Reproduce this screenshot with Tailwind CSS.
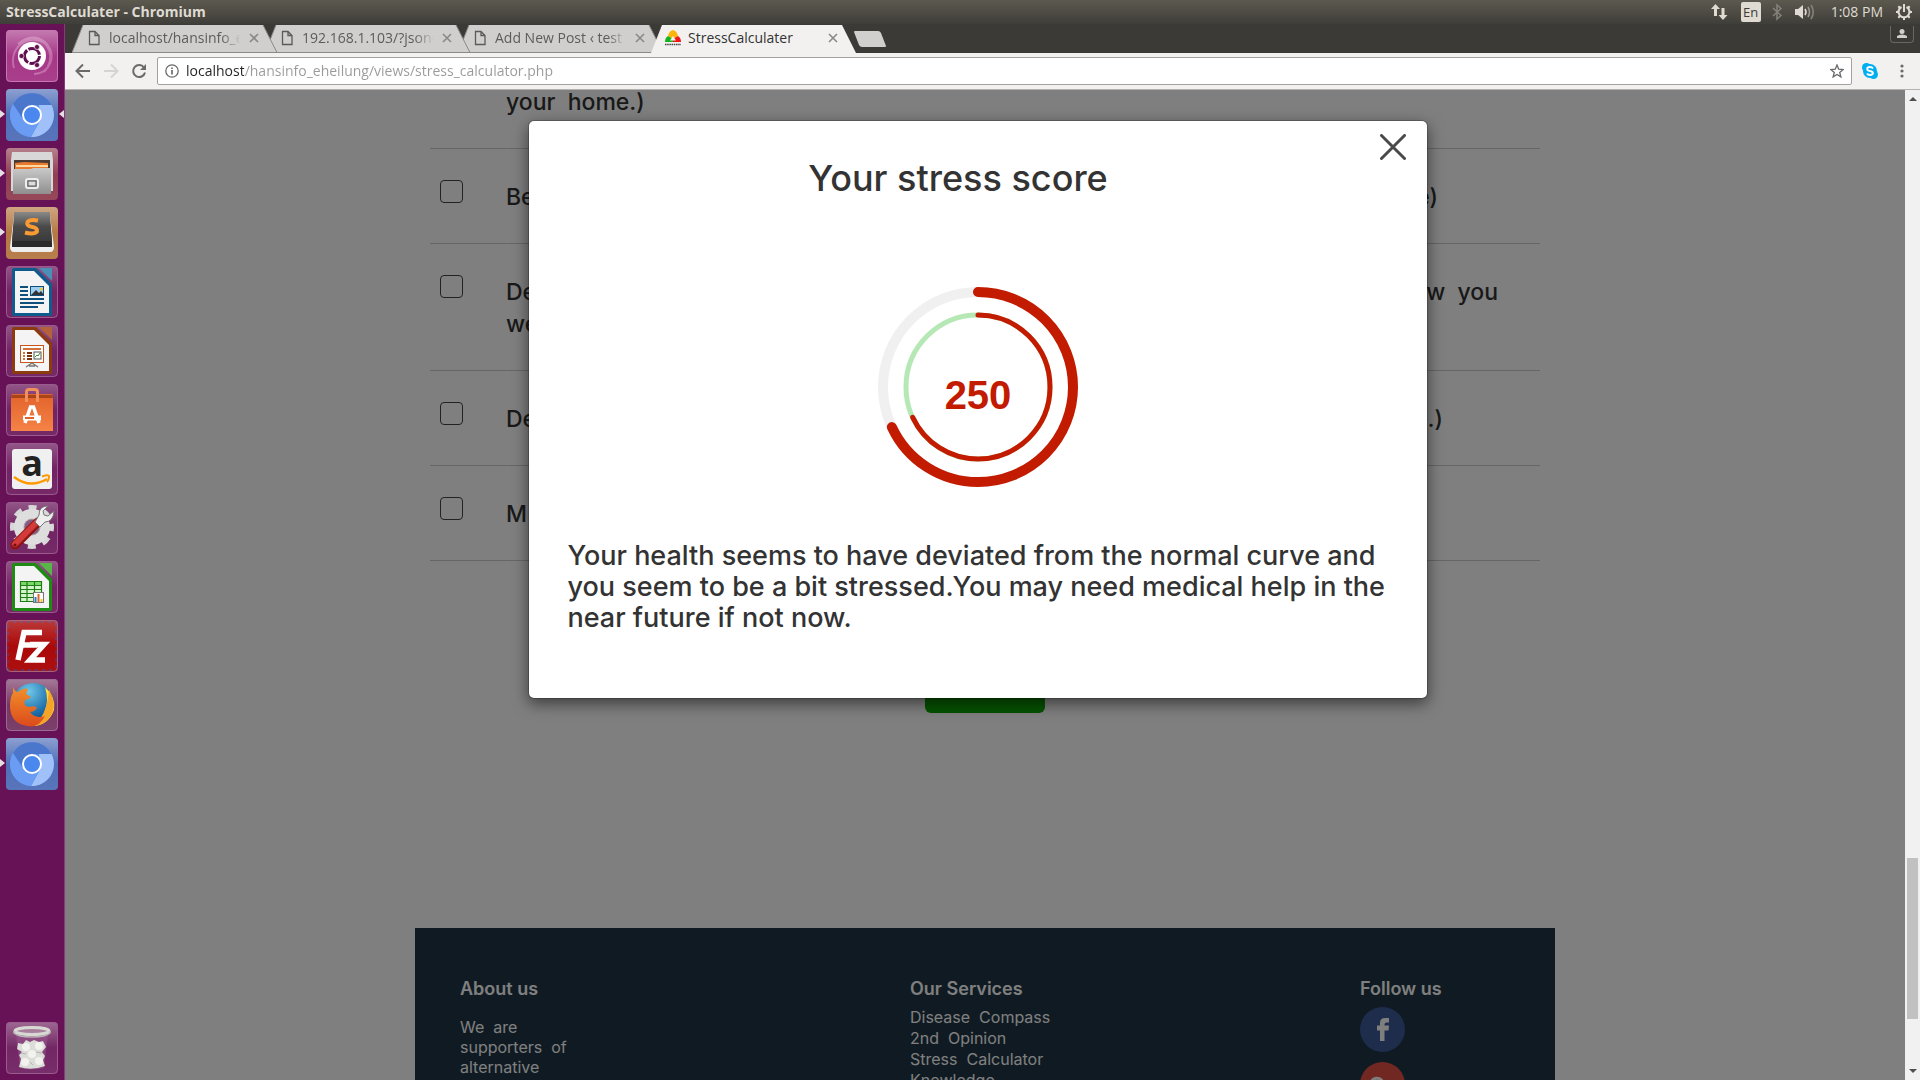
<!DOCTYPE html>
<html lang="en">
<head>
<meta charset="utf-8">
<title>StressCalculater</title>
<script src="https://cdn.jsdelivr.net/npm/@tailwindcss/browser@4"></script>
</head>
<body class="h-screen overflow-hidden flex flex-col bg-[#3c3a36] font-['Open_Sans','Noto_Sans',sans-serif]">

<!-- Gradients and shapes shared by the launcher icons -->
<svg class="absolute" width="0" height="0" aria-hidden="true">
  <defs>
    <linearGradient id="gloss" x1="0" y1="0" x2="0" y2="1"><stop offset="0" stop-color="#fff" stop-opacity=".38"/><stop offset=".5" stop-color="#fff" stop-opacity=".06"/><stop offset="1" stop-color="#fff" stop-opacity=".1"/></linearGradient>
    <linearGradient id="steel" x1="0" y1="0" x2="0" y2="1"><stop offset="0" stop-color="#c9c9c9"/><stop offset="1" stop-color="#8f8f8f"/></linearGradient>
    <linearGradient id="dark" x1="0" y1="0" x2="0" y2="1"><stop offset="0" stop-color="#8a8a8a"/><stop offset=".5" stop-color="#4a4a4a"/><stop offset="1" stop-color="#3a3a3a"/></linearGradient>
    <linearGradient id="bag" x1="0" y1="0" x2="0" y2="1"><stop offset="0" stop-color="#e2632a"/><stop offset="1" stop-color="#f58247"/></linearGradient>
    <linearGradient id="fox" x1="0" y1="0" x2="0" y2="1"><stop offset="0" stop-color="#f0902a"/><stop offset="1" stop-color="#dc4a1c"/></linearGradient>
    <radialGradient id="globe" cx=".4" cy=".2" r=".9"><stop offset="0" stop-color="#6fc8ea"/><stop offset=".6" stop-color="#1d6da8"/><stop offset="1" stop-color="#0d3564"/></radialGradient>
    <symbol id="chromium" viewBox="0 0 52 52">
      <circle cx="26" cy="26" r="22" fill="#5b8ee8"/>
      <path d="M7 15A22 22 0 0 1 45.500 16L26 16L16 31Z" fill="#4a76cc"/>
      <path d="M45.500 16A22 22 0 0 1 25 48L35 30L33 16Z" fill="#9fc0f8"/>
      <path d="M7 15A22 22 0 0 0 25 48L33 33L17 30Z" fill="#699cf2"/>
      <circle cx="26" cy="26" r="9" fill="#4a88f0" stroke="#fff" stroke-width="2"/>
    </symbol>
    <symbol id="page" viewBox="0 0 16 16"><path d="M3.500 1.500H9L13 5.500V14.500H3.500ZM9 1.500V5.500H13" fill="none" stroke="#5a5a5a" stroke-width="1.300"/></symbol>
    <symbol id="cross" viewBox="0 0 10 10"><path d="M1 1L9 9M9 1L1 9" fill="none" stroke="#888" stroke-width="1.600"/></symbol>
  </defs>
</svg>

<!-- Desktop panel -->
<header class="h-6 shrink-0 flex items-center justify-between pl-1.5 pr-[7px] bg-linear-to-b from-[#5c594f] to-[#403e39] text-[#dfdbd2]">
  <h1 class="text-sm font-bold leading-6">StressCalculater - Chromium</h1>
  <div class="flex items-center">
    <svg class="w-[18px] h-[18px] mr-[13px]" viewBox="0 0 18 18" fill="#dfdbd2"><path d="M5.500 1L10 6H7V13H4V6H1ZM13 17L8.500 12H11.500V5H14.500V12H17.500Z"/></svg>
    <span class="w-5 h-5 mr-[10px] rounded-xs bg-[#dfdbd2] text-[#3c3b37] text-[13px] leading-5 text-center">En</span>
    <svg class="w-3 h-5 mr-3" viewBox="0 0 12 20" fill="none" stroke="#85827b" stroke-width="1.500"><path d="M2 6L10 13.500L6 17V3L10 6.500L2 14"/></svg>
    <svg class="w-5 h-4 mr-4" viewBox="0 0 20 16" fill="none" stroke-width="1.600"><path d="M0 5H3L8 1V15L3 11H0Z" fill="#dfdbd2"/><path d="M10 5Q12 8 10 11" stroke="#dfdbd2"/><path d="M13 3Q16 8 13 13" stroke="#9a978f"/><path d="M16 1Q20.500 8 16 15" stroke="#85827b"/></svg>
    <time class="text-sm leading-6 mr-3">1:08 PM</time>
    <svg class="w-[18px] h-[18px]" viewBox="0 0 18 18" fill="none" stroke="#dfdbd2"><path d="M6.500 4A5.500 5.500 0 1 0 11.500 4" stroke-width="2.200"/><path d="M9 1V9" stroke-width="2"/><path d="M1 9H3.500M14.500 9H17M3.300 14.700L5 13M14.700 14.700L13 13M9 14.500V17M3.300 3.300L5 5M14.700 3.300L13 5" stroke-width="2"/></svg>
  </div>
</header>

<div class="flex flex-1 min-h-0">
  <!-- Launcher -->
  <nav class="w-[65px] shrink-0 flex flex-col gap-[7px] pt-1.5 pb-1.5 pl-1.5 bg-[#671257] border-r border-[#8a3a7c]">
    <a href="#" aria-label="Dash" class="block w-[52px] h-[52px] rounded-sm overflow-hidden">
      <svg viewBox="0 0 52 52"><rect width="52" height="52" fill="#a02a80"/><path d="M8 38C2 18 22 2 40 14C52 24 44 44 28 44M26 8C44 8 50 30 38 42M12 14C26 2 44 8 45 26" fill="none" stroke="#cf86b8" stroke-width="2" opacity=".6"/><rect width="52" height="52" fill="url(#gloss)"/><circle cx="26" cy="26" r="14" fill="#fff"/><circle cx="26" cy="26" r="7.500" fill="none" stroke="#5e0f4c" stroke-width="3" stroke-dasharray="14.200 1.500"/><g fill="#5e0f4c" stroke="#fff" stroke-width=".6"><circle cx="15.500" cy="26" r="2.500"/><circle cx="31" cy="17" r="2.500"/><circle cx="31" cy="35" r="2.500"/></g><rect x=".5" y=".5" width="51" height="51" rx="4" fill="none" stroke="#c777b0"/></svg>
    </a>
    <a href="#" aria-label="Chromium" class="relative block w-[52px] h-[52px]">
      <svg class="rounded-sm" viewBox="0 0 52 52"><rect width="52" height="52" fill="#4666b4"/><rect width="52" height="52" fill="url(#gloss)"/><use href="#chromium"/></svg>
      <span class="absolute -left-1.5 top-[21px] border-y-4 border-l-5 border-y-transparent border-l-[#e4dfe3]"></span>
      <span class="absolute -right-1.5 top-[21px] border-y-4 border-r-5 border-y-transparent border-r-[#e4dfe3]"></span>
    </a>
    <a href="#" aria-label="Files" class="relative block w-[52px] h-[52px]">
      <svg class="rounded-sm" viewBox="0 0 52 52"><rect width="52" height="52" fill="#8a3347"/><rect width="52" height="52" fill="url(#gloss)"/><path d="M6 4H46L47 12V43H5V12Z" fill="#d8d8d8"/><path d="M8 12H44V24H8Z" fill="#4a3a34"/><path d="M9 15L18 14L42 15V24H9Z" fill="#e8792e"/><path d="M10 18H42" stroke="#ffd9a0" stroke-width="2"/><path d="M7 21H25L27 20H45V46H7Z" fill="url(#steel)"/><rect x="20" y="31" width="12" height="9" rx="2" fill="none" stroke="#eee" stroke-width="2"/><rect x="22" y="33" width="8" height="5" fill="#ddd" stroke="#555"/></svg>
      <span class="absolute -left-1.5 top-[21px] border-y-4 border-l-5 border-y-transparent border-l-[#e4dfe3]"></span>
    </a>
    <a href="#" aria-label="Sublime Text" class="relative block w-[52px] h-[52px]">
      <svg class="rounded-sm" viewBox="0 0 52 52"><rect width="52" height="52" fill="#b07038"/><rect width="52" height="52" fill="url(#gloss)"/><path d="M8 8L4 40Q4 45 8 45H44Q48 45 48 40L44 8Z" fill="#eee"/><path d="M9 5H43L46 36V40H6V36Z" fill="#2a2a2a"/><path d="M10 5H42Q44 5 44 8L46 34H6L8 8Q8 5 10 5Z" fill="url(#dark)"/><path d="M32 13.500Q24 12 21.500 15Q20 18.500 25.500 19.800Q32 21 31 24.500Q28 28 19 25.500" fill="none" stroke="#f99a32" stroke-width="4"/></svg>
      <span class="absolute -left-1.5 top-[21px] border-y-4 border-l-5 border-y-transparent border-l-[#e4dfe3]"></span>
    </a>
    <a href="#" aria-label="Writer" class="block w-[52px] h-[52px] rounded-sm overflow-hidden">
      <svg viewBox="0 0 52 52"><rect width="52" height="52" fill="#6b1a5c"/><rect width="52" height="52" fill="url(#gloss)" opacity=".7"/><path d="M6 4Q6 2 8 2H30L46 18V48Q46 50 44 50H8Q6 50 6 48Z" fill="#0f5c8c"/><path d="M33 2H46V15Z" fill="#4a8fb5"/><path d="M9 5H28L43 20V47H9Z" fill="#f4f4f4"/><path d="M14 21H22M14 25H22M14 29H22M14 33H38M14 37H38M14 41H32" stroke="#0f4f7c" stroke-width="2"/><rect x="24.500" y="20.500" width="13" height="9" fill="#9cd0ee" stroke="#0f4f7c"/><path d="M25 29L30 24L33 27L35 25L38 29Z" fill="#333"/><circle cx="35.500" cy="23" r="1.500" fill="#f5c820"/><rect x=".5" y=".5" width="51" height="51" rx="4" fill="none" stroke="#9a5a90"/></svg>
    </a>
    <a href="#" aria-label="Impress" class="block w-[52px] h-[52px] rounded-sm overflow-hidden">
      <svg viewBox="0 0 52 52"><rect width="52" height="52" fill="#6b1a5c"/><rect width="52" height="52" fill="url(#gloss)" opacity=".7"/><path d="M6 4Q6 2 8 2H30L46 18V47Q46 49 44 49H8Q6 49 6 47Z" fill="#8c3a10"/><path d="M33 2H46V15Z" fill="#b5623a"/><path d="M9 5H28L43 20V46H9Z" fill="#f4f4f4"/><rect x="14.500" y="20.500" width="23" height="17" fill="#fff" stroke="#c8561c"/><path d="M17 24H35" stroke="#d4703c" stroke-width="2"/><path d="M17 28H19M17 31H19M17 34H19" stroke="#d4703c" stroke-width="2"/><path d="M21 28H26M21 31H26M21 34H26" stroke="#7a3210" stroke-width="2"/><rect x="28" y="27" width="7" height="7" fill="#fff" stroke="#555"/><path d="M29 32L31 30L32 31L34 28" stroke="#2a9c2a" fill="none"/><path d="M26 38L20 42M26 38L32 42M23 41H29" stroke="#777" stroke-width="1.500"/><rect x=".5" y=".5" width="51" height="51" rx="4" fill="none" stroke="#9a5a90"/></svg>
    </a>
    <a href="#" aria-label="Software" class="block w-[52px] h-[52px] rounded-sm overflow-hidden">
      <svg viewBox="0 0 52 52"><rect width="52" height="52" fill="#6b1a5c"/><rect width="52" height="52" fill="url(#gloss)" opacity=".7"/><path d="M6 10H46L47 14V47H5V14Z" fill="url(#bag)"/><path d="M6 11H46L47 14H5Z" fill="#a8431a"/><path d="M20.500 18V8Q20.500 5.500 23 5.500H29Q31.500 5.500 31.500 8V18" fill="none" stroke="#f0905c" stroke-width="3"/><path d="M19 39L24.500 23H27.500L33 39" fill="none" stroke="#fff" stroke-width="3.500"/><path d="M17 34H35" stroke="#fff" stroke-width="5"/><path d="M19 34H28" stroke="#e2632a" stroke-width="2"/><rect x=".5" y=".5" width="51" height="51" rx="4" fill="none" stroke="#9a5a90"/></svg>
    </a>
    <a href="#" aria-label="Amazon" class="block w-[52px] h-[52px]">
      <svg class="rounded-sm" viewBox="0 0 52 52"><rect width="52" height="52" fill="#6b1a5c"/><rect width="52" height="52" fill="url(#gloss)" opacity=".7"/><rect x="6" y="6" width="40" height="40" rx="3" fill="#f0f0f0"/><text x="26" y="33" text-anchor="middle" font-family="Open Sans, sans-serif" font-weight="700" font-size="36" fill="#222">a</text><path d="M8 34Q24 46 41 36" fill="none" stroke="#f90" stroke-width="2.500"/><path d="M36 33.500Q44 31 43 34Q43 37 41 39" fill="none" stroke="#f90" stroke-width="2"/><rect x=".5" y=".5" width="51" height="51" rx="4" fill="none" stroke="#9a5a90"/></svg>
    </a>
    <a href="#" aria-label="Settings" class="block w-[52px] h-[52px] rounded-sm overflow-hidden">
      <svg viewBox="0 0 52 52"><rect width="52" height="52" fill="#6b1a5c"/><rect width="52" height="52" fill="url(#gloss)" opacity=".7"/><circle cx="26" cy="25" r="19.500" fill="none" stroke="#d8d8d8" stroke-width="5" stroke-dasharray="8 7.310" stroke-dashoffset="4"/><circle cx="26" cy="25" r="13" fill="none" stroke="#dedede" stroke-width="10"/><circle cx="26" cy="25" r="8" fill="#8a5a80" stroke="#aaa"/><path d="M9 43L32 20" stroke="#8f1414" stroke-width="9" stroke-linecap="round"/><path d="M9 42L31 20" stroke="#d33a3a" stroke-width="6" stroke-linecap="round"/><path d="M29 20L34 25L39 20Q47 20 48 9L42 14L38 13L37 9L42 4Q33 4 33 13Z" fill="#eee" stroke="#777"/><circle cx="9" cy="43" r="1.500" fill="#701010"/><rect x=".5" y=".5" width="51" height="51" rx="4" fill="none" stroke="#9a5a90"/></svg>
    </a>
    <a href="#" aria-label="Calc" class="block w-[52px] h-[52px] rounded-sm overflow-hidden">
      <svg viewBox="0 0 52 52"><rect width="52" height="52" fill="#6b1a5c"/><rect width="52" height="52" fill="url(#gloss)" opacity=".7"/><path d="M6 4Q6 2 8 2H30L46 18V48Q46 50 44 50H8Q6 50 6 48Z" fill="#1e8c14"/><path d="M33 2H46V15Z" fill="#58b548"/><path d="M9 5H28L43 20V47H9Z" fill="#f4f4f4"/><path d="M14 20H36V41H14Z" fill="#d4f5cc"/><path d="M14 20H36V24H14Z" fill="#7ad868"/><path d="M14.500 20V41M21 20V41M28.500 20V41M35.500 20V41M14 20.500H36M14 24.500H36M14 28.500H36M14 32.500H36M14 36.500H36M14 40.500H36" stroke="#1e7c14" stroke-width="1.200"/><rect x="27.500" y="31.500" width="10" height="10" fill="#fff" stroke="#777"/><path d="M29.500 41V36" stroke="#2a7cc8" stroke-width="2"/><path d="M32.500 41V33" stroke="#e2632a" stroke-width="2"/><path d="M35.500 41V38" stroke="#f5c820" stroke-width="2"/><rect x=".5" y=".5" width="51" height="51" rx="4" fill="none" stroke="#9a5a90"/></svg>
    </a>
    <a href="#" aria-label="FileZilla" class="block w-[52px] h-[52px] rounded-sm overflow-hidden">
      <svg viewBox="0 0 52 52"><rect width="52" height="52" fill="#6b2050"/><rect x="3" y="3" width="46" height="46" fill="#a80000" stroke="#a80000" stroke-width="3" stroke-dasharray="4 3"/><rect width="52" height="52" fill="url(#gloss)" opacity=".6"/><path d="M36 12.500H18L12 40M15 25H31M24 24.500H38L24 40H39" fill="none" stroke="#fff" stroke-width="5.500"/><rect x=".5" y=".5" width="51" height="51" rx="4" fill="none" stroke="#b06070"/></svg>
    </a>
    <a href="#" aria-label="Firefox" class="block w-[52px] h-[52px] rounded-sm overflow-hidden">
      <svg viewBox="0 0 52 52"><rect width="52" height="52" fill="#6e2a5a"/><rect width="52" height="52" fill="url(#gloss)"/><circle cx="27" cy="25" r="21" fill="url(#globe)"/><path d="M39 8Q50 18 48 31Q42 47 26 47Q38 42 39 31Q43 22 39 8Z" fill="#ffd83a"/><path d="M43 11Q52 26 44 38Q38 47 26 47Q41 38 43 11Z" fill="#f5a42a"/><path d="M7 8Q9 13 12 13Q17 8 22 10L20 15L25 18Q22 21 19 21Q17 27 23 28Q29 26 31 29Q28 33 24 33Q29 40 39 37Q34 47 25 47.500Q4 46 4 27Q4 18 7 14Z" fill="url(#fox)"/><rect x=".5" y=".5" width="51" height="51" rx="4" fill="none" stroke="#9a6a90"/></svg>
    </a>
    <a href="#" aria-label="Chromium window" class="relative block w-[52px] h-[52px]">
      <svg class="rounded-sm" viewBox="0 0 52 52"><rect width="52" height="52" fill="#4666b4"/><rect width="52" height="52" fill="url(#gloss)"/><use href="#chromium"/></svg>
      <span class="absolute -left-1.5 top-[21px] border-y-4 border-l-5 border-y-transparent border-l-[#e4dfe3]"></span>
    </a>
    <a href="#" aria-label="Trash" class="block w-[52px] h-[52px] mt-auto rounded-sm overflow-hidden">
      <svg viewBox="0 0 52 52"><rect width="52" height="52" fill="#6b1a5c"/><rect width="52" height="52" fill="url(#gloss)" opacity=".9"/><path d="M10 12H42L38 46Q26 49 14 46Z" fill="#9a5a90" opacity=".5"/><path d="M12 21L17 22L20 18L24 20L28 18L33 20L37 19L40 25L36 30L39 34L37 38L39 44Q26 49 13 45L15 37L13 33L16 30L11 27Z" fill="#dcdcd8"/><g fill="#f2f2ee"><circle cx="20" cy="25" r="4"/><circle cx="33" cy="24" r="4"/><circle cx="26" cy="32" r="4"/><circle cx="19" cy="40" r="4"/><circle cx="33" cy="39" r="4"/></g><path d="M15 31L20 32M30 30L36 31M24 40L27 43" fill="none" stroke="#b4b4b0"/><ellipse cx="26" cy="9" rx="17" ry="3.500" fill="#a8809c" stroke="#d8d8d4" stroke-width="3"/><path d="M8 9V11Q12 15 26 15T44 11V9" fill="none" stroke="#b8b8b4" stroke-width="1.500"/><rect x=".5" y=".5" width="51" height="51" rx="4" fill="none" stroke="#9a5a90"/></svg>
    </a>
  </nav>

  <!-- Browser window -->
  <div class="flex-1 min-w-0 flex flex-col">
    <div class="h-[29px] shrink-0 flex justify-between pl-[7px] pr-1.5">
      <div class="flex text-sm leading-[26px] text-[#5c5c5c]">
        <div class="relative z-40 w-[205px] h-[29px] flex items-center pl-[14px] pb-0.5">
          <svg class="absolute inset-0 w-full h-full" viewBox="0 0 205 29"><path d="M0 29L11 1H191L205 29Z" fill="#d1cfcd"/><path d="M0 28.500L11 1M191 1L205 28.500H0" fill="none" stroke="#8c8a87"/></svg>
          <svg class="relative w-4 h-4"><use href="#page"/></svg>
          <span class="relative ml-[7px] w-[132px] overflow-hidden whitespace-nowrap [mask-image:linear-gradient(to_right,#000_85%,transparent)]">localhost/hansinfo_eheilung</span>
          <button class="relative ml-2" aria-label="Close tab"><svg class="w-[10px] h-[10px]"><use href="#cross"/></svg></button>
        </div>
        <div class="relative z-30 -ml-3 w-[205px] h-[29px] flex items-center pl-[14px] pb-0.5">
          <svg class="absolute inset-0 w-full h-full" viewBox="0 0 205 29"><path d="M0 29L11 1H191L205 29Z" fill="#d1cfcd"/><path d="M0 28.500L11 1M191 1L205 28.500H0" fill="none" stroke="#8c8a87"/></svg>
          <svg class="relative w-4 h-4"><use href="#page"/></svg>
          <span class="relative ml-[7px] w-[132px] overflow-hidden whitespace-nowrap [mask-image:linear-gradient(to_right,#000_85%,transparent)]">192.168.1.103/?json=</span>
          <button class="relative ml-2" aria-label="Close tab"><svg class="w-[10px] h-[10px]"><use href="#cross"/></svg></button>
        </div>
        <div class="relative z-20 -ml-3 w-[205px] h-[29px] flex items-center pl-[14px] pb-0.5">
          <svg class="absolute inset-0 w-full h-full" viewBox="0 0 205 29"><path d="M0 29L11 1H191L205 29Z" fill="#d1cfcd"/><path d="M0 28.500L11 1M191 1L205 28.500H0" fill="none" stroke="#8c8a87"/></svg>
          <svg class="relative w-4 h-4"><use href="#page"/></svg>
          <span class="relative ml-[7px] w-[132px] overflow-hidden whitespace-nowrap [mask-image:linear-gradient(to_right,#000_85%,transparent)]">Add New Post ‹ test –</span>
          <button class="relative ml-2" aria-label="Close tab"><svg class="w-[10px] h-[10px]"><use href="#cross"/></svg></button>
        </div>
        <div class="relative z-50 -ml-3 w-[205px] h-[29px] flex items-center pl-[14px] pb-0.5 text-[#333]">
          <svg class="absolute inset-0 w-full h-full" viewBox="0 0 205 29"><path d="M0 29L11 1H191L205 29Z" fill="#f2f1f0"/></svg>
          <svg class="relative w-4 h-4" viewBox="0 0 16 16"><path d="M8 0Q12 1 13 6L8 9L3 6Q4 1 8 0Z" fill="#fbb50a"/><path d="M3 6L8 9V12H0Q0 8 3 6Z" fill="#12b41c"/><path d="M13 6L8 9V12H16Q16 8 13 6Z" fill="#f01414"/><path d="M8 6L11 10.500H5Z" fill="#f2f1f0"/><path d="M0 14.500H16" stroke="#444" stroke-width="1.500" stroke-dasharray="1.500 .7"/></svg>
          <span class="relative ml-[7px] w-[132px] whitespace-nowrap">StressCalculater</span>
          <button class="relative ml-2" aria-label="Close tab"><svg class="w-[10px] h-[10px]"><use href="#cross"/></svg></button>
        </div>
        <button class="ml-[-2px] self-center" aria-label="New tab"><svg class="w-8 h-4" viewBox="0 0 32 16"><path d="M0 1Q0 0 1 0H24Q26 0 27 2L32 15Q32 16 31 16H8Q6 16 5 14Z" fill="#d1cfcd"/></svg></button>
      </div>
      <button class="w-6 h-[17px] mt-0.5 flex items-center justify-center rounded-b border border-t-0 border-[#6a6863]" aria-label="Profile"><svg class="w-[10px] h-[10px]" viewBox="0 0 10 10" fill="#d1cfcd"><circle cx="5" cy="2.500" r="2.500"/><path d="M0 9V7Q2 5.500 5 5.500T10 7V9Z"/></svg></button>
    </div>

    <div class="h-[37px] shrink-0 flex items-center pl-[10px] pr-[10px] bg-[#f2f1f0] border-b border-[#b4b2b0]">
      <button aria-label="Back"><svg class="w-4 h-4" viewBox="0 0 16 16" fill="none" stroke="#6a6a6a" stroke-width="2"><path d="M15 8H2M8 1.500L1.500 8L8 14.500"/></svg></button>
      <button class="ml-3" aria-label="Forward"><svg class="w-4 h-4" viewBox="0 0 16 16" fill="none" stroke="#d5d4d3" stroke-width="2"><path d="M1 8H14M8 1.500L14.500 8L8 14.500"/></svg></button>
      <button class="ml-3" aria-label="Reload"><svg class="w-4 h-4" viewBox="0 0 16 16" fill="none" stroke="#6a6a6a" stroke-width="2"><path d="M13 4.500A6 6 0 1 0 14 9.500"/><path d="M15 1V7H9Z" fill="#6a6a6a" stroke="none"/></svg></button>
      <div class="ml-[10px] flex-1 h-7 flex items-center px-[7px] gap-[7px] bg-white border border-[#a4a2a0] rounded-xs">
        <svg class="w-[14px] h-[14px] shrink-0" viewBox="0 0 14 14" fill="none" stroke="#6a6a6a"><circle cx="7" cy="7" r="6.200" stroke-width="1.300"/><path d="M7 6V10.500M7 3.500V5" stroke-width="1.700"/></svg>
        <input aria-label="Address" class="flex-1 min-w-0 text-sm outline-none bg-clip-text text-transparent [background-image:linear-gradient(to_right,#222_58px,#999_58px)]" value="localhost/hansinfo_eheilung/views/stress_calculator.php">
        <button aria-label="Bookmark"><svg class="w-[14px] h-[14px]" viewBox="0 0 14 14" fill="none" stroke="#6a6a6a" stroke-width="1.300"><path d="M7 1L8.700 5.200L13.200 5.500L9.700 8.400L10.900 12.900L7 10.400L3.100 12.900L4.300 8.400L.8 5.500L5.300 5.200Z"/></svg></button>
      </div>
      <button class="ml-[10px]" aria-label="Skype"><svg class="w-4 h-4" viewBox="0 0 16 16"><circle cx="8" cy="8" r="7" fill="#00aff0"/><circle cx="4.500" cy="4.500" r="4.500" fill="#00aff0"/><circle cx="11.500" cy="11.500" r="4.500" fill="#00aff0"/><path d="M11 5.500Q10 4 8 4Q5.200 4 5.200 5.900Q5.200 7.400 8 8Q10.900 8.500 10.900 10.200Q10.700 12 8 12Q6 12 5 10.400" fill="none" stroke="#fff" stroke-width="1.900"/></svg></button>
      <button class="ml-4" aria-label="Menu"><svg class="w-4 h-4" viewBox="0 0 16 16" fill="#6a6a6a"><circle cx="8" cy="3" r="1.600"/><circle cx="8" cy="8" r="1.600"/><circle cx="8" cy="13" r="1.600"/></svg></button>
    </div>

    <div class="flex flex-1 min-h-0">
      <div class="relative flex-1 min-w-0 overflow-hidden bg-white font-['Inter',sans-serif]">
        <!-- Stress questionnaire, scrolled to its end -->
        <main class="-mt-1 mx-auto w-full max-w-[1140px] text-[#333]">
          <form class="px-[15px] text-[23px] leading-8 font-medium">
            <div class="pl-[76px] pb-[30px] border-b border-[#ccc]">your&nbsp; home.)</div>
            <div class="flex items-start pl-[10px] pt-8 pb-[30px] border-b border-[#ccc]">
              <input id="q1" type="checkbox" class="appearance-none w-[23px] h-[23px] -mt-px mr-[43px] shrink-0 border border-[#444] rounded">
              <label for="q1" class="flex flex-1 justify-between pr-[102px]"><span>Be</span><span>e)</span></label>
            </div>
            <div class="flex items-start pl-[10px] pt-8 pb-[30px] border-b border-[#ccc]">
              <input id="q2" type="checkbox" class="appearance-none w-[23px] h-[23px] -mt-px mr-[43px] shrink-0 border border-[#444] rounded">
              <label for="q2" class="flex flex-1 justify-between pr-[42px]"><span>De<br>we</span><span>w&nbsp; you</span></label>
            </div>
            <div class="flex items-start pl-[10px] pt-8 pb-[30px] border-b border-[#ccc]">
              <input id="q3" type="checkbox" class="appearance-none w-[23px] h-[23px] -mt-px mr-[43px] shrink-0 border border-[#444] rounded">
              <label for="q3" class="flex flex-1 justify-between pr-[97px]"><span>De</span><span>s.)</span></label>
            </div>
            <div class="flex items-start pl-[10px] pt-8 pb-[30px] border-b border-[#ccc]">
              <input id="q4" type="checkbox" class="appearance-none w-[23px] h-[23px] -mt-px mr-[43px] shrink-0 border border-[#444] rounded">
              <label for="q4">M</label>
            </div>
            <button type="button" aria-label="Submit" class="block mx-auto mt-[104px] w-[120px] h-12 rounded-md bg-[#0aa600]"></button>
          </form>
          <footer class="mt-[215px] h-[400px] flex pl-[45px] pt-[51px] bg-[#1e3444] text-white text-base">
            <section class="w-[450px]">
              <h2 class="text-lg leading-5 font-semibold">About us</h2>
              <p class="mt-[18px] w-32 leading-5">We&nbsp; are supporters&nbsp; of alternative</p>
            </section>
            <section class="w-[450px]">
              <h2 class="text-lg leading-5 font-semibold">Our Services</h2>
              <ul class="mt-2 leading-[21px]">
                <li><a href="#">Disease&nbsp; Compass</a></li>
                <li><a href="#">2nd&nbsp; Opinion</a></li>
                <li><a href="#">Stress&nbsp; Calculator</a></li>
                <li><a href="#">Knowledge</a></li>
              </ul>
            </section>
            <section>
              <h2 class="text-lg leading-5 font-semibold">Follow us</h2>
              <div class="mt-2 flex flex-col gap-[10px]">
                <a href="#" aria-label="Facebook"><svg class="w-[45px] h-[45px]" viewBox="0 0 45 45"><circle cx="22.500" cy="22.500" r="22.500" fill="#3f5a99"/><path d="M20 34V23.500H17V18.500H20V16Q20 11 25 11H29V15.500H26.500Q24.500 15.500 24.500 17.500V18.500H29L28.500 23.500H24.500V34Z" fill="#fff"/></svg></a>
                <a href="#" aria-label="Google Plus"><svg class="w-[45px] h-[45px]" viewBox="0 0 45 45"><circle cx="22.500" cy="22.500" r="22.500" fill="#e45145"/><path d="M22 18.500A6.500 6.500 0 1 0 23.500 23H17M28 23H36M32 19V27" fill="none" stroke="#fff" stroke-width="3"/></svg></a>
              </div>
            </section>
          </footer>
        </main>

        <!-- Result dialog -->
        <div class="absolute inset-0 bg-black/50 flex items-start justify-center pt-[30px] pr-[15px]">
          <div role="dialog" aria-labelledby="score-title" class="w-full max-w-[900px] h-[579px] bg-white bg-clip-padding border border-black/20 rounded-md shadow-[0_5px_15px_rgba(0,0,0,0.5)] text-[#333]">
            <div class="flex items-start pr-[21px]">
              <h2 id="score-title" class="flex-1 pl-2 pt-[37px] text-4xl leading-10 font-medium text-center">Your stress score</h2>
              <button class="mt-[13px] w-[26px] h-[26px]" aria-label="Close"><svg viewBox="0 0 26 26" fill="none" stroke="#4a4a4a" stroke-width="3" stroke-linecap="round"><path d="M1.500 1.500L24.500 24.500M24.500 1.500L1.500 24.500"/></svg></button>
            </div>
            <svg class="mx-auto mt-[89px] w-[200px] h-[200px]" viewBox="0 0 200 200" fill="none">
              <circle cx="100" cy="100" r="95" stroke="#f0f0f0" stroke-width="10"/>
              <circle cx="100" cy="100" r="72" stroke="#b6e8b6" stroke-width="5"/>
              <circle cx="100" cy="100" r="95" stroke="#c21b00" stroke-width="10" stroke-linecap="round" pathLength="360" stroke-dasharray="245 360" transform="rotate(-90 100 100)"/>
              <circle cx="100" cy="100" r="72" stroke="#c21b00" stroke-width="5" stroke-linecap="round" pathLength="360" stroke-dasharray="245 360" transform="rotate(-90 100 100)"/>
              <text x="100" y="122" text-anchor="middle" font-family="Liberation Sans, Arial, sans-serif" font-weight="700" font-size="40" fill="#c21b00">250</text>
            </svg>
            <p class="mt-[53px] pl-[39px] pr-6 text-[27px] leading-[31px] font-medium">Your health seems to have deviated from the normal curve and<br>you seem to be a bit stressed.You may need medical help in the<br>near future if not now.</p>
          </div>
        </div>
      </div>

      <!-- Page scrollbar -->
      <div class="w-[15px] shrink-0 flex flex-col items-center py-[7px] bg-[#f1f1f1]">
        <span class="border-x-4 border-b-4 border-x-transparent border-b-[#505050]"></span>
        <span class="w-[11px] h-[161px] mt-auto mb-[50px] bg-[#c1c1c1]"></span>
        <span class="border-x-4 border-t-4 border-x-transparent border-t-[#505050]"></span>
      </div>
    </div>
  </div>
</div>
</body>
</html>
